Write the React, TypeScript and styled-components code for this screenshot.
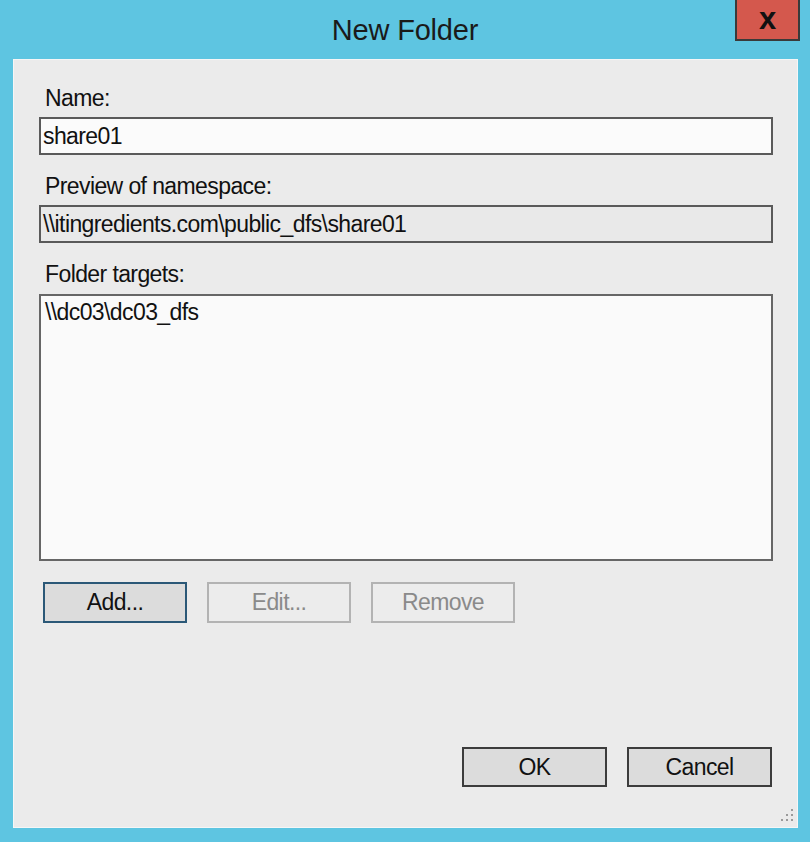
import React from "react";
import styled, { createGlobalStyle } from "styled-components";

const GlobalStyle = createGlobalStyle`
  html, body { margin: 0; padding: 0; }
  body {
    background: #5ec5e1;
    font-family: "Liberation Sans", Arial, sans-serif;
    color: #111;
  }
  * { box-sizing: border-box; }
`;

const Window = styled.div`
  width: 810px;
  height: 842px;
  background: #5ec5e1;
  display: flex;
  flex-direction: column;
`;

const TitleBar = styled.header`
  height: 59px;
  flex: none;
  display: grid;
  grid-template-columns: 1fr auto 1fr;
  align-items: center;
`;

const Title = styled.h1`
  grid-column: 2;
  margin: 0;
  font-size: 29px;
  font-weight: 400;
  color: #1a1a1a;
  letter-spacing: -0.2px;
  padding-top: 2px;
`;

const CloseButton = styled.button`
  grid-column: 3;
  justify-self: end;
  align-self: start;
  margin-right: 10px;
  width: 65px;
  height: 41px;
  background: #d4584d;
  border: 2px solid #3a3a3a;
  border-top: none;
  padding: 0 0 3px 0;
  font-family: "Liberation Sans", Arial, sans-serif;
  font-size: 31px;
  font-weight: 700;
  line-height: 1;
  color: #111;
`;

const Client = styled.main`
  position: relative;
  flex: 1;
  margin: 0 12px 14px 13px;
  background: #ebebeb;
  box-shadow: inset 0 0 0 1px rgba(255, 255, 255, 0.55);
  display: flex;
  flex-direction: column;
  padding: 25px 25px 41px 26px;
  font-size: 23px;
  letter-spacing: -0.6px;
`;

const Label = styled.div<{ $space?: number }>`
  line-height: 28px;
  padding-left: 6px;
  margin-bottom: ${(p) => p.$space ?? 5}px;
`;

const Field = styled.section<{ $gap?: number }>`
  display: flex;
  flex-direction: column;
  margin-bottom: ${(p) => p.$gap ?? 17}px;
`;

const TextBox = styled.div<{ $readOnly?: boolean }>`
  height: 38px;
  border: 2px solid #5a5a5a;
  background: ${(p) => (p.$readOnly ? "#e9e9e9" : "#fbfbfb")};
  padding: 0 2px;
  display: flex;
  align-items: center;
  line-height: 28px;
  white-space: nowrap;
`;

const ListBox = styled.div`
  height: 267px;
  border: 2px solid #666;
  background: #fafafa;
  padding: 2px 4px;
  line-height: 28px;
`;

const ButtonRow = styled.div`
  display: flex;
  gap: 20px;
  margin-top: 21px;
  padding-left: 4px;
`;

const Button = styled.button<{ $variant?: "focused" | "disabled" | "normal" }>`
  width: 144px;
  height: 41px;
  font-family: "Liberation Sans", Arial, sans-serif;
  font-size: 23px;
  letter-spacing: -0.6px;
  padding: 0;
  background: ${(p) =>
    p.$variant === "disabled" ? "#ececec" : "#dcdcdc"};
  color: ${(p) => (p.$variant === "disabled" ? "#8a8a8a" : "#111")};
  border: 2px solid
    ${(p) =>
      p.$variant === "focused"
        ? "#2b5877"
        : p.$variant === "disabled"
        ? "#b3b3b3"
        : "#3c3c3c"};
`;

const Spacer = styled.div`
  flex: 1;
`;

const Footer = styled.footer`
  display: flex;
  justify-content: flex-end;
  gap: 20px;
  padding-right: 1px;
`;

const FooterButton = styled(Button)`
  width: 145px;
  height: 40px;
`;

const Grip = styled.svg`
  position: absolute;
  right: 4px;
  bottom: 5px;
`;

export default function App() {
  return (
    <>
      <GlobalStyle />
      <Window>
        <TitleBar>
          <Title>New Folder</Title>
          <CloseButton aria-label="Close">x</CloseButton>
        </TitleBar>
        <Client>
          <Field>
            <Label>Name:</Label>
            <TextBox>share01</TextBox>
          </Field>
          <Field>
            <Label>Preview of namespace:</Label>
            <TextBox $readOnly>
              {"\\\\itingredients.com\\public_dfs\\share01"}
            </TextBox>
          </Field>
          <Field $gap={0}>
            <Label $space={6}>Folder targets:</Label>
            <ListBox>{"\\\\dc03\\dc03_dfs"}</ListBox>
          </Field>
          <ButtonRow>
            <Button $variant="focused">Add...</Button>
            <Button $variant="disabled">Edit...</Button>
            <Button $variant="disabled">Remove</Button>
          </ButtonRow>
          <Spacer />
          <Footer>
            <FooterButton>OK</FooterButton>
            <FooterButton>Cancel</FooterButton>
          </Footer>
          <Grip width="14" height="14" viewBox="0 0 14 14">
            <g fill="#9a9a9a">
              <rect x="11" y="0" width="2" height="2" />
              <rect x="6" y="5" width="2" height="2" />
              <rect x="11" y="5" width="2" height="2" />
              <rect x="1" y="10" width="2" height="2" />
              <rect x="6" y="10" width="2" height="2" />
              <rect x="11" y="10" width="2" height="2" />
            </g>
          </Grip>
        </Client>
      </Window>
    </>
  );
}
